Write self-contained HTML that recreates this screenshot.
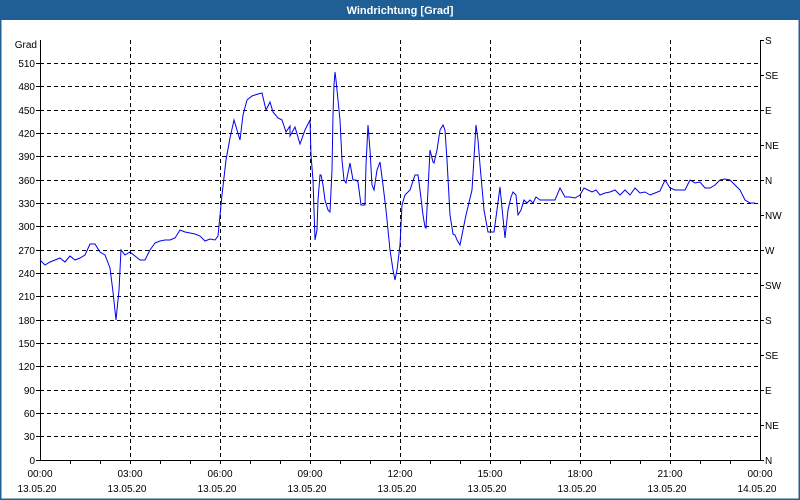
<!DOCTYPE html>
<html><head><meta charset="utf-8"><style>
html,body{margin:0;padding:0;width:800px;height:500px;overflow:hidden;background:#fff;font-family:"Liberation Sans",sans-serif}
</style></head><body>
<svg width="800" height="500" xmlns="http://www.w3.org/2000/svg" font-family="Liberation Sans, sans-serif" font-size="10">
<rect x="0" y="0" width="800" height="500" fill="#fff"/>
<rect x="0.5" y="0.5" width="799" height="499" fill="none" stroke="#1f5f96" stroke-width="2"/>
<rect x="0" y="0" width="800" height="20" fill="#1f5f96"/>
<text x="400" y="14" fill="#fff" font-weight="bold" font-size="11" text-anchor="middle">Windrichtung [Grad]</text>
<g stroke="#000" stroke-width="1" stroke-dasharray="4,3" fill="none">
<path d="M40 63.5H760M40 86.5H760M40 110.5H760M40 133.5H760M40 156.5H760M40 180.5H760M40 203.5H760M40 226.5H760M40 250.5H760M40 273.5H760M40 296.5H760M40 320.5H760M40 343.5H760M40 366.5H760M40 390.5H760M40 413.5H760M40 436.5H760"/>
<path d="M130.5 40V460M220.5 40V460M310.5 40V460M400.5 40V460M490.5 40V460M580.5 40V460M670.5 40V460"/>
</g>
<g stroke="#000" stroke-width="1" fill="none">
<path d="M40.5 40V460.5H760.5V40"/>
<path d="M70.5 460v4M100.5 460v4M130.5 460v4M160.5 460v4M190.5 460v4M220.5 460v4M250.5 460v4M280.5 460v4M310.5 460v4M340.5 460v4M370.5 460v4M400.5 460v4M430.5 460v4M460.5 460v4M490.5 460v4M520.5 460v4M550.5 460v4M580.5 460v4M610.5 460v4M640.5 460v4M670.5 460v4M700.5 460v4M730.5 460v4"/>
<path d="M36 63.5h4M36 86.5h4M36 110.5h4M36 133.5h4M36 156.5h4M36 180.5h4M36 203.5h4M36 226.5h4M36 250.5h4M36 273.5h4M36 296.5h4M36 320.5h4M36 343.5h4M36 366.5h4M36 390.5h4M36 413.5h4M36 436.5h4M36 460.5h4"/>
<path d="M760 40.5h4M760 75.5h4M760 110.5h4M760 145.5h4M760 180.5h4M760 215.5h4M760 250.5h4M760 285.5h4M760 320.5h4M760 355.5h4M760 390.5h4M760 425.5h4M760 460.5h4"/>
</g>
<g fill="#000" text-anchor="end">
<text x="37" y="48">Grad</text>
<text x="35" y="67">510</text><text x="35" y="90">480</text><text x="35" y="114">450</text><text x="35" y="137">420</text><text x="35" y="160">390</text><text x="35" y="184">360</text><text x="35" y="207">330</text><text x="35" y="230">300</text><text x="35" y="254">270</text><text x="35" y="277">240</text><text x="35" y="300">210</text><text x="35" y="324">180</text><text x="35" y="347">150</text><text x="35" y="370">120</text><text x="35" y="394">90</text><text x="35" y="417">60</text><text x="35" y="440">30</text><text x="35" y="464">0</text>
</g>
<g fill="#000">
<text x="765" y="44">S</text><text x="765" y="79">SE</text><text x="765" y="114">E</text><text x="765" y="149">NE</text><text x="765" y="184">N</text><text x="765" y="219">NW</text><text x="765" y="254">W</text><text x="765" y="289">SW</text><text x="765" y="324">S</text><text x="765" y="359">SE</text><text x="765" y="394">E</text><text x="765" y="429">NE</text><text x="765" y="464">N</text>
</g>
<g fill="#000" text-anchor="middle">
<text x="40" y="477">00:00</text><text x="130" y="477">03:00</text><text x="220" y="477">06:00</text><text x="310" y="477">09:00</text><text x="400" y="477">12:00</text><text x="490" y="477">15:00</text><text x="580" y="477">18:00</text><text x="670" y="477">21:00</text><text x="760" y="477">00:00</text>
<text x="37" y="492">13.05.20</text><text x="127" y="492">13.05.20</text><text x="217" y="492">13.05.20</text><text x="307" y="492">13.05.20</text><text x="397" y="492">13.05.20</text><text x="487" y="492">13.05.20</text><text x="577" y="492">13.05.20</text><text x="667" y="492">13.05.20</text><text x="757" y="492">14.05.20</text>
</g>
<polyline fill="none" stroke="#0000ee" stroke-width="1" points="40,260 45,265 50,262 55,260 60,258 65,262 70,256 75,260 80,258 85,255 90,244 95,244 100,252 105,255 110,268 113,292 116,320 119,290 121,250 125,255 130,252 135,256 140,260 145,260 150,250 155,243 160,241 165,240 170,240 175,238 180,230 185,232 190,233 195,234 200,236 205,241 210,239 215,240 218,236 222,195 226,160 230,138 234,120 237,130 240,140 243,115 247,100 252,96 258,94 262,93 266,110 270,102 273,112 278,118 282,120 286,132 290,126 290,136 295,127 300,144 305,130 310,120 311,155 313,180 315,240 317,230 318,200 320,175 321,175 323,185 325,200 328,210 330,212 332,170 333,115 334,85 335,72 336,80 338,100 340,120 342,160 344,180 346,183 350,163 353,180 356,180 358,182 361,205 364,205 365,205 366,165 368,125 370,150 372,185 374,190 377,170 380,162 383,185 386,210 390,250 393,270 395,280 397,270 400,245 402,205 405,195 407,193 410,190 415,175 418,175 420,190 423,215 425,227 426,228 428,190 430,150 433,162 434,163 437,150 440,130 443,125 445,130 447,160 450,215 453,234 455,235 457,240 460,245 466,215 472,190 476,125 478,140 480,165 484,210 488,232 490,232 494,232 497,210 500,187 503,218 505,238 508,210 511,197 513,192 516,195 518,215 521,210 524,200 527,203 530,200 533,203 536,197 540,200 545,200 550,200 555,200 560,188 565,197 570,197 575,198 580,195 584,188 588,190 592,192 596,190 600,195 605,193 610,192 615,190 620,195 625,190 630,195 635,188 640,193 645,192 650,195 655,193 660,191 665,180 670,188 675,190 680,190 685,190 690,180 695,183 700,182 705,188 710,188 715,185 720,180 725,179 730,180 735,185 740,190 745,200 750,203 755,203"/>
</svg>
</body></html>
